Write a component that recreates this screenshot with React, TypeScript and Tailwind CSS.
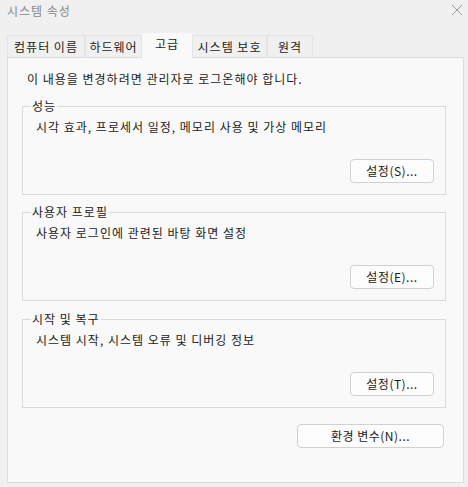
import { ReactNode } from "react";

const font = { fontFamily: '"Noto Sans CJK KR", "Noto Sans", sans-serif' };

const tabs = [
  { label: "컴퓨터 이름", w: "w-[78px]" },
  { label: "하드웨어", w: "w-[57px]" },
  { label: "고급", w: "w-[50px]", active: true },
  { label: "시스템 보호", w: "w-[75px]" },
  { label: "원격", w: "w-[46px]" },
];

const Button = ({ children, className }: { children: ReactNode; className: string }) => (
  <button
    className={`h-[24px] rounded-[4px] border border-[#d0d0d0] bg-[#fdfdfd] text-[12px] leading-[16px] tracking-[0.5px] text-[#1b1b1b] ${className}`}
  >
    {children}
  </button>
);

interface GroupProps {
  title: string;
  text: string;
  button: string;
  className?: string;
}

const Group = ({ title, text, button, className = "" }: GroupProps) => (
  <fieldset className={`ml-[14px] w-[424px] border border-[#dadada] p-0 ${className}`}>
    <legend className="ml-[8px] px-[1px] text-[12px] leading-[16px] tracking-[1px] text-[#1b1b1b]">{title}</legend>
    <div className="flex flex-col pl-[13px] pr-[11px] pt-[5px] pb-[11px]">
      <div className="text-[12px] leading-[16px] tracking-[1px] text-[#1b1b1b]">{text}</div>
      <div className="mt-[24px] flex justify-end">
        <Button className="w-[84px]">{button}</Button>
      </div>
    </div>
  </fieldset>
);

export default function App() {
  return (
    <div className="flex h-[487px] w-[468px] flex-col bg-[#f0f0f0]" style={font}>
      <div className="flex h-[21px] items-center justify-between pl-[7px] pr-[3px]">
        <span className="text-[12px] leading-[16px] tracking-[1px] text-[#8a8a8a]">시스템 속성</span>
        <svg width="16" height="16" viewBox="0 0 16 16" className="mt-[-2px]">
          <path d="M3 3 L13 13 M13 3 L3 13" stroke="#9a9a9a" strokeWidth="1" fill="none" />
        </svg>
      </div>

      <div className="mt-[12px] flex h-[24px] items-end pl-[7px]">
        {tabs.map((t) =>
          t.active ? (
            <div
              key={t.label}
              className={`${t.w} relative z-10 -mb-px flex h-[25px] items-start justify-center bg-[#f9f9f9] pt-[3px] text-[12px] leading-[16px] tracking-[1px] text-[#1b1b1b]`}
            >
              {t.label}
            </div>
          ) : (
            <div
              key={t.label}
              className={`${t.w} flex h-[22px] items-center justify-center border border-b-0 border-[#e4e4e4] bg-[#f0f0f0] text-[12px] leading-[16px] tracking-[1px] text-[#1b1b1b]`}
            >
              {t.label}
            </div>
          ),
        )}
      </div>

      <div className="ml-[7px] flex h-[426px] w-[457px] flex-col border border-[#dcdcdc] bg-[#f9f9f9]">
        <div className="pl-[19px] pt-[13px] text-[12px] leading-[16px] tracking-[1px] text-[#1b1b1b]">
          이 내용을 변경하려면 관리자로 로그온해야 합니다.
        </div>
        <Group
          className="mt-[11px]"
          title="성능"
          text="시각 효과, 프로세서 일정, 메모리 사용 및 가상 메모리"
          button="설정(S)..."
        />
        <Group
          className="mt-[9px]"
          title="사용자 프로필"
          text="사용자 로그인에 관련된 바탕 화면 설정"
          button="설정(E)..."
        />
        <Group
          className="mt-[10px]"
          title="시작 및 복구"
          text="시스템 시작, 시스템 오류 및 디버깅 정보"
          button="설정(T)..."
        />
        <div className="mt-[16px] flex justify-end pr-[19px]">
          <Button className="w-[147px]">환경 변수(N)...</Button>
        </div>
      </div>
    </div>
  );
}
